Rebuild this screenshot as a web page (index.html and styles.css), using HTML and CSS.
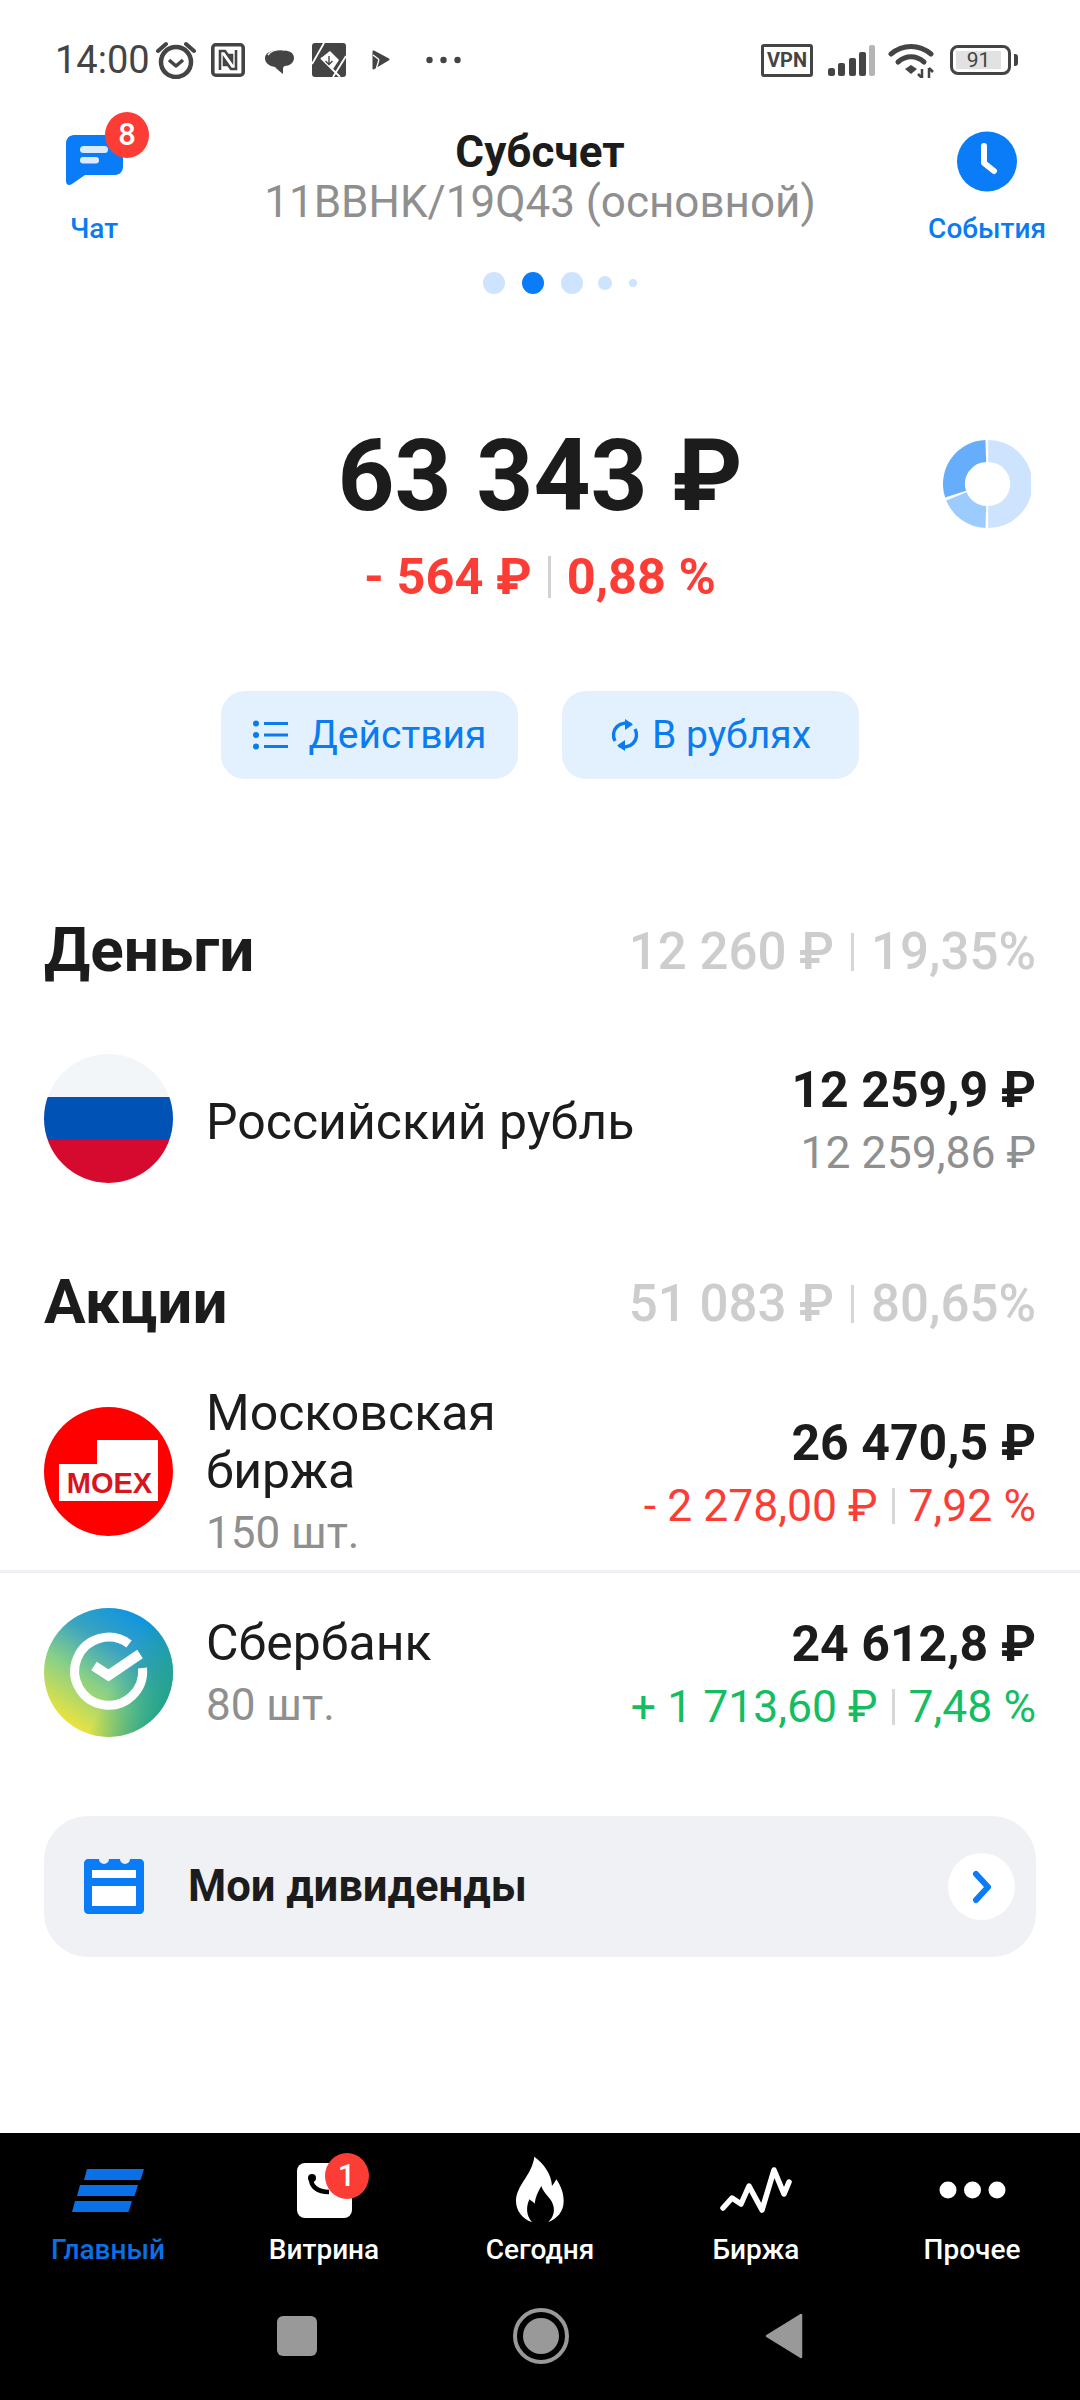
FILE: index.html
```html
<!doctype html>
<html lang="ru">
<head>
  <meta charset="utf-8">
  <meta name="viewport" content="width=device-width, initial-scale=1">
  <title>Субсчет</title>
  <link rel="stylesheet" href="styles.css">
</head>
<body>
<div class="page">

  <div class="status">
    <div class="status-left">
      <span class="time">14:00</span>
      <svg class="s-alarm" width="40" height="38" viewBox="0 0 40 38"><circle cx="20" cy="21" r="15" fill="none" stroke="#444" stroke-width="4.500"/><path d="M13 19l7 6 7-6" fill="none" stroke="#444" stroke-width="3.500" stroke-linejoin="round"/><path d="M2 10L10 3M38 10L30 3" stroke="#444" stroke-width="4" stroke-linecap="round"/></svg>
      <svg class="s-nfc" width="34" height="34" viewBox="0 0 34 34"><rect x="1.800" y="1.800" width="30.400" height="30.400" rx="3" fill="none" stroke="#444" stroke-width="3.600"/><path d="M9 27V8h5l7 10V12h-4M25 7v19h-5l-7-10v6h4" fill="none" stroke="#444" stroke-width="2.600"/></svg>
      <svg class="s-bubble" width="29" height="28" viewBox="0 0 29 28"><path d="M14 4c9 0 15 2 15 8 0 5-5 8-9 8-1 0-2 1-2 3v5c-3-2-6-5-8-7-6-1-10-4-10-9 0-5 6-8 14-8z" fill="#444"/><path d="M3 9c3-4 9-6 17-5" stroke="#fff" stroke-width="1.300" fill="none"/></svg>
      <svg class="s-diamond" width="34" height="34" viewBox="0 0 34 34"><rect width="34" height="34" rx="3" fill="#444"/><path d="M0 21L12 0M9 15L28 34M34 13L21 34" stroke="#fff" stroke-width="1.800"/><path d="M9 15l9-7 9 9-6 9z" fill="#fff"/><path d="M17 13v8M13.500 18l3.500 3.500 3.500-3.500" fill="none" stroke="#444" stroke-width="1.400"/></svg>
      <svg class="s-play" width="18" height="20" viewBox="0 0 18 20"><path d="M1.500 1.500l15 8-15 9z" fill="#444" stroke="#444" stroke-width="2" stroke-linejoin="round"/><path d="M7 9.500L1 5M7 9.500L4.500 18" stroke="#fff" stroke-width="1.300"/></svg>
      <svg class="s-more" width="35" height="8" viewBox="0 0 35 8"><circle cx="3.500" cy="4" r="3.200" fill="#444"/><circle cx="17.500" cy="4" r="3.200" fill="#444"/><circle cx="31.500" cy="4" r="3.200" fill="#444"/></svg>
    </div>
    <div class="status-right">
      <span class="vpn">VPN</span>
      <svg class="s-signal" width="47" height="31" viewBox="0 0 47 31"><rect x="0" y="23" width="7" height="8" rx="2.500" fill="#444"/><rect x="10" y="18" width="7" height="13" rx="2" fill="#444"/><rect x="21" y="13" width="7" height="18" rx="2" fill="#444"/><rect x="31" y="7" width="7" height="24" rx="2" fill="#444"/><rect x="41" y="0" width="6" height="31" rx="2" fill="#b5b5b5"/></svg>
      <svg class="s-wifi" width="46" height="36" viewBox="0 0 46 36"><path d="M3 12C15 2 31 2 43 12" fill="none" stroke="#444" stroke-width="5" stroke-linecap="round"/><path d="M10 20C18 13 28 13 36 20" fill="none" stroke="#444" stroke-width="5" stroke-linecap="round"/><path d="M17 27l6-4 6 4-6 5z" fill="#444"/><path d="M34 27v9M30 32l4 4M41 26v10M41 26l4 4" fill="none" stroke="#444" stroke-width="2.500"/></svg>
      <div class="battery"><div class="battery-body"><span class="battery-fill">91</span></div><div class="battery-tip"></div></div>
    </div>
  </div>

  <header class="head">
    <div class="head-side head-chat">
      <div class="chat-icon">
        <svg width="57" height="50" viewBox="0 0 57 50"><path d="M8 0h41c4.400 0 8 3.600 8 8v24c0 4.400-3.600 8-8 8H19L6 49c-3 2-6 1-6-3V8c0-4.400 3.600-8 8-8z" fill="#0a7cf8"/><rect x="14" y="11" width="28" height="7" rx="3.500" fill="#fff" opacity=".85"/><rect x="14" y="22" width="19" height="6.500" rx="3.200" fill="#fff" opacity=".85"/></svg>
        <span class="badge chat-badge">8</span>
      </div>
      <span class="head-label">Чат</span>
    </div>
    <div class="head-title">
      <div class="title">Субсчет</div>
      <div class="subtitle">11BBHK/19Q43 (основной)</div>
    </div>
    <div class="head-side head-events">
      <svg width="60" height="61" viewBox="0 0 60 61"><circle cx="30" cy="30.500" r="30" fill="#0a7cf8"/><path d="M27 15v17l10 8" fill="none" stroke="#fff" stroke-width="6" stroke-linecap="round" stroke-linejoin="round"/></svg>
      <span class="head-label">События</span>
    </div>
  </header>

  <div class="dots">
    <i class="dot"></i><i class="dot dot-on"></i><i class="dot"></i><i class="dot dot-m"></i><i class="dot dot-s"></i>
  </div>

  <section class="total">
    <div class="total-sum">63 343 ₽</div>
    <div class="total-diff red"><span>- 564 ₽</span><span class="sep sep-big"></span><span>0,88 %</span></div>
    <svg class="donut" width="88" height="88" viewBox="0 0 88 88"><g fill="none" stroke-width="22"><path d="M45.200 11A33 33 0 0 1 45.200 77" stroke="#cde3fe"/><path d="M42.800 77A33 33 0 0 1 13.400 56.400" stroke="#9ccbfe"/><path d="M12.600 54.200A33 33 0 0 1 42.800 11" stroke="#66aefc"/></g></svg>
  </section>

  <div class="actions">
    <div class="btn">
      <svg width="36" height="30" viewBox="0 0 36 30"><circle cx="3" cy="3.500" r="3" fill="#0a7cf0"/><circle cx="3" cy="15" r="3" fill="#0a7cf0"/><circle cx="3" cy="26.500" r="3" fill="#0a7cf0"/><path d="M11 3.500h24M11 15h24M11 26.500h24" stroke="#0a7cf0" stroke-width="3"/></svg>
      <span class="btn-text btn-text-wide">Действия</span>
    </div>
    <div class="btn">
      <svg width="30" height="34" viewBox="0 0 30 34"><path d="M21 6.500A12 12 0 0 0 5 23M9 27.500A12 12 0 0 0 25 11" fill="none" stroke="#0a7cf0" stroke-width="3.400"/><path d="M15 1l8 5.500-8 5.500zM15 33l-8-5.500 8-5.500z" fill="#0a7cf0"/></svg>
      <span class="btn-text">В рублях</span>
    </div>
  </div>

  <section class="group group-money">
    <div class="group-head">
      <h2>Деньги</h2>
      <div class="group-sum"><span>12 260 ₽</span><span class="sep sep-light"></span><span>19,35%</span></div>
    </div>
    <div class="row row-flag">
      <svg class="logo" width="129" height="129" viewBox="0 0 129 129"><defs><clipPath id="c1"><circle cx="64.500" cy="64.500" r="64.500"/></clipPath></defs><g clip-path="url(#c1)"><rect width="129" height="43" fill="#f2f6f9"/><rect y="43" width="129" height="43" fill="#0052b4"/><rect y="86" width="129" height="43" fill="#d60a2e"/></g></svg>
      <div class="row-name"><div class="name">Российский рубль</div></div>
      <div class="row-vals">
        <div class="val">12 259,9 ₽</div>
        <div class="val-sub gray">12 259,86 ₽</div>
      </div>
    </div>
  </section>

  <section class="group group-shares">
    <div class="group-head">
      <h2>Акции</h2>
      <div class="group-sum"><span>51 083 ₽</span><span class="sep sep-light"></span><span>80,65%</span></div>
    </div>
    <div class="row row-moex">
      <svg class="logo" width="129" height="129" viewBox="0 0 129 129"><circle cx="64.500" cy="64.500" r="64.500" fill="#fe0000"/><path d="M15 57H53V33H114V94H15z" fill="#fff"/><text class="moex-text" x="65.500" y="86" text-anchor="middle">MOEX</text></svg>
      <div class="row-name">
        <div class="name">Московская<br>биржа</div>
        <div class="name-sub">150 шт.</div>
      </div>
      <div class="row-vals">
        <div class="val">26 470,5 ₽</div>
        <div class="val-sub red"><span>- 2 278,00 ₽</span><span class="sep sep-small"></span><span>7,92 %</span></div>
      </div>
    </div>
    <div class="row row-sber">
      <svg class="logo" width="129" height="129" viewBox="0 0 129 129"><defs><linearGradient id="g1" x1="0.150" y1="0.900" x2="0.700" y2="0.050"><stop offset="0" stop-color="#f1e53a"/><stop offset=".4" stop-color="#86cf88"/><stop offset=".7" stop-color="#3aa3c0"/><stop offset="1" stop-color="#1295de"/></linearGradient><linearGradient id="g2" x1="0.500" y1="0.400" x2="1" y2="0.650"><stop offset=".2" stop-color="#21a08e" stop-opacity="0"/><stop offset="1" stop-color="#21a38a"/></linearGradient></defs><circle cx="64.500" cy="64.500" r="64.500" fill="url(#g1)"/><circle cx="64.500" cy="64.500" r="64.500" fill="url(#g2)"/><path d="M85 36A34 34 0 1 0 98.500 60" fill="none" stroke="#fff" stroke-width="9"/><path d="M50 58L64.500 67.500 96 46" fill="none" stroke="#fff" stroke-width="10"/></svg>
      <div class="row-name">
        <div class="name">Сбербанк</div>
        <div class="name-sub">80 шт.</div>
      </div>
      <div class="row-vals">
        <div class="val">24 612,8 ₽</div>
        <div class="val-sub green"><span>+ 1 713,60 ₽</span><span class="sep sep-small"></span><span>7,48 %</span></div>
      </div>
    </div>
  </section>

  <div class="dividends">
    <svg width="60" height="55" viewBox="0 0 60 55"><path d="M4 0H15a5 5 0 0 0 10 0H36a5 5 0 0 0 10 0H56c2 0 4 2 4 4v47c0 2-2 4-4 4H4c-2 0-4-2-4-4V4c0-2 2-4 4-4z" fill="#0a7cf8"/><rect x="8" y="11" width="44" height="8" fill="#fff"/><rect x="8" y="27" width="44" height="20" fill="#fff"/></svg>
    <span class="dividends-text">Мои дивиденды</span>
    <span class="dividends-arrow"><svg width="20" height="34" viewBox="0 0 20 34"><path d="M4 4l12 13L4 30" fill="none" stroke="#0a7cf8" stroke-width="6" stroke-linecap="round" stroke-linejoin="round"/></svg></span>
  </div>

  <nav class="tabs">
    <div class="tab tab-on">
      <div class="tab-icon"><svg width="72" height="43" viewBox="0 0 72 43"><path d="M15 0h57l-3.500 11H12zM8 16h58l-3.500 11H5zM3 32h57l-3.500 11H0z" fill="#0a70e6"/></svg></div>
      <span>Главный</span>
    </div>
    <div class="tab">
      <div class="tab-icon">
        <svg width="55" height="55" viewBox="0 0 55 55"><rect width="55" height="55" rx="8" fill="#fff"/><circle cx="15" cy="15" r="4" fill="#000"/><path d="M14 16c0 7 6 13 18 13" fill="none" stroke="#000" stroke-width="4.500"/></svg>
        <span class="badge tab-badge">1</span>
      </div>
      <span>Витрина</span>
    </div>
    <div class="tab">
      <div class="tab-icon"><svg width="48" height="68" viewBox="82 52 144 204"><path d="M137 54C165 75 188 105 190 142C195 135 200 128 203 122C218 145 225 165 225 187C225 220 205 240 178 251C195 235 200 215 192 195C185 175 165 165 158 142C148 160 140 175 138 195C132 188 125 185 122 182C112 205 112 230 130 251C100 240 82 215 82 187C82 140 130 110 137 54Z" fill="#fff"/></svg></div>
      <span>Сегодня</span>
    </div>
    <div class="tab">
      <div class="tab-icon"><svg width="72" height="47" viewBox="0 0 72 47"><path d="M3 41L12 31 21 37 29 19 42 43 54 3 64 27 69 15" fill="none" stroke="#fff" stroke-width="5.500" stroke-linecap="round" stroke-linejoin="round"/></svg></div>
      <span>Биржа</span>
    </div>
    <div class="tab">
      <div class="tab-icon"><svg width="67" height="18" viewBox="0 0 67 18"><circle cx="9" cy="9" r="8.500" fill="#fff"/><circle cx="33.500" cy="9" r="8.500" fill="#fff"/><circle cx="58" cy="9" r="8.500" fill="#fff"/></svg></div>
      <span>Прочее</span>
    </div>
  </nav>

  <div class="sysbar">
    <i class="sys-square"></i>
    <i class="sys-circle"><b></b></i>
    <svg width="38" height="46" viewBox="0 0 38 46"><path d="M36 2v42L2 23z" fill="#999" stroke="#999" stroke-width="2.500" stroke-linejoin="round"/></svg>
  </div>

</div>
</body>
</html>
```

FILE: styles.css
```css
* {
  box-sizing: border-box;
}

html, body {
  margin: 0;
  padding: 0;
  background: #fff;
}

.page {
  width: 1080px;
  height: 2400px;
  display: flex;
  flex-direction: column;
  font-family: Roboto, "Noto Sans", sans-serif;
  color: #1c1c1c;
  overflow: hidden;
}

.red { color: #fb3d36; }
.green { color: #14bd62; }
.gray { color: #8f8f8f; }

/* status bar */
.status {
  height: 112px;
  padding: 8px 62px 0 55px;
  display: flex;
  justify-content: space-between;
  align-items: center;
  flex-shrink: 0;
}

.status-left, .status-right {
  display: flex;
  align-items: center;
}

.time {
  font-size: 38px;
  color: #444;
  width: 101px;
}

.s-nfc { margin-left: 15px; }
.s-bubble { margin-left: 20px; }
.s-diamond { margin-left: 18px; }
.s-play { margin-left: 26px; }
.s-more { margin-left: 36px; }

.vpn {
  width: 52px;
  height: 33px;
  border: 3.500px solid #444;
  border-radius: 3px;
  font-size: 20px;
  font-weight: 700;
  line-height: 26px;
  text-align: center;
  color: #444;
}

.s-signal { margin-left: 15px; }
.s-wifi { margin-left: 13px; }

.battery {
  margin-left: 16px;
  display: flex;
  align-items: center;
}

.battery-body {
  width: 61px;
  height: 30px;
  border: 3.500px solid #444;
  border-radius: 8px;
  padding: 2.500px 3px;
}

.battery-fill {
  display: block;
  width: 45px;
  height: 18px;
  background: #e2e2e2;
  font-size: 21px;
  line-height: 19px;
  text-align: center;
  color: #444;
}

.battery-tip {
  width: 4px;
  height: 12px;
  margin-left: 3px;
  background: #444;
  border-radius: 0 3px 3px 0;
}

/* header */
.head {
  display: grid;
  grid-template-columns: 1fr auto 1fr;
  height: 142px;
  flex-shrink: 0;
}

.head-side {
  display: flex;
  flex-direction: column;
}

.head-chat {
  justify-self: start;
  align-items: flex-start;
  margin-left: 70px;
}

.head-events {
  justify-self: end;
  align-items: center;
  margin-right: 34px;
  padding-top: 19px;
}

.chat-icon {
  position: relative;
  width: 57px;
  height: 50px;
  margin: 23px 0 0 -4px;
}

.chat-icon svg {
  display: block;
}

.badge {
  position: absolute;
  display: block;
  background: #fb3d36;
  color: #fff;
  border-radius: 50%;
  text-align: center;
  font-weight: 500;
}

.chat-badge {
  width: 44px;
  height: 46px;
  top: -23px;
  left: 39px;
  font-size: 31px;
  line-height: 46px;
}

.head-label {
  font-size: 28px;
  font-weight: 500;
  line-height: 32px;
  color: #0a7cf0;
  white-space: nowrap;
}

.head-chat .head-label { margin-top: 28px; }
.head-events .head-label { margin-top: 21px; }

.head-title {
  text-align: center;
  padding-top: 17px;
}

.title {
  font-size: 44px;
  font-weight: 700;
  line-height: 46px;
}

.subtitle {
  font-size: 44px;
  line-height: 54px;
  color: #8f8f8f;
}

.dots {
  display: flex;
  align-items: center;
  justify-content: center;
  gap: 17px;
  height: 22px;
  margin-top: 18px;
  padding-left: 40px;
  flex-shrink: 0;
}

.dot {
  display: block;
  width: 22px;
  height: 22px;
  border-radius: 50%;
  background: #cde3fe;
}

.dot-on { background: #0a7cf8; }
.dot-m { width: 14px; height: 14px; margin-left: -2px; }
.dot-s { width: 8px; height: 8px; }

/* total */
.total {
  position: relative;
  margin-top: 123px;
  text-align: center;
  flex-shrink: 0;
}

.total-sum {
  font-size: 99.500px;
  font-weight: 700;
  line-height: 118px;
}

.total-diff {
  margin-top: 14px;
  font-size: 50.500px;
  font-weight: 700;
  line-height: 56px;
  display: flex;
  justify-content: center;
  align-items: center;
}

.sep {
  display: inline-block;
  width: 3px;
  background: #d2d2d2;
}

.sep-big { height: 42px; margin: 0 16px; }
.sep-light { height: 38px; margin: 0 17px; background: #d6d6d6; }
.sep-small { height: 36px; margin: 0 14px; background: #d8d8d8; }

.donut {
  position: absolute;
  right: 49px;
  top: 23px;
}

/* action buttons */
.actions {
  display: flex;
  justify-content: center;
  gap: 44px;
  margin-top: 86px;
  flex-shrink: 0;
}

.btn {
  width: 297px;
  height: 88px;
  border-radius: 24px;
  background: #e3f0fe;
  display: flex;
  align-items: center;
  justify-content: center;
  gap: 12px;
}

.btn-text {
  font-size: 39px;
  color: #0a7cf0;
}

.btn-text-wide { margin-left: 8px; }

/* groups */
.group {
  flex-shrink: 0;
}

.group-money { margin-top: 135px; }
.group-shares { margin-top: 83px; }

.group-head {
  display: flex;
  justify-content: space-between;
  align-items: center;
  padding: 0 44px;
  height: 70px;
}

h2 {
  margin: 0;
  font-size: 62px;
  font-weight: 700;
}

.group-sum {
  display: flex;
  align-items: center;
  padding-top: 5px;
  font-size: 51px;
  font-weight: 500;
  color: #cdcdcd;
}

.row {
  display: flex;
  align-items: center;
  padding: 0 44px;
}

.row-flag { height: 129px; margin-top: 70px; }
.row-moex { height: 200px; margin-top: 37px; border-bottom: 3px solid #eff0f6; }
.row-sber { height: 129px; margin-top: 35px; }

.logo {
  flex-shrink: 0;
  display: block;
}

.moex-text {
  font-family: "Liberation Sans", Arial, sans-serif;
  font-size: 29px;
  font-weight: 700;
  fill: #d8141d;
}

.row-name {
  margin-left: 33px;
  padding-top: 6px;
  flex: 1;
}

.name {
  font-size: 50px;
  line-height: 58px;
}

.name-sub {
  font-size: 44px;
  line-height: 66px;
  color: #8f8f8f;
}

.row-vals {
  padding-top: 6px;
  text-align: right;
}

.val {
  font-size: 50px;
  font-weight: 700;
  line-height: 63px;
}

.val-sub {
  font-size: 44.500px;
  line-height: 63px;
  display: flex;
  justify-content: flex-end;
  align-items: center;
}

/* dividends */
.dividends {
  margin: 79px 44px 0;
  height: 141px;
  border-radius: 44px;
  background: #f0f1f5;
  display: flex;
  align-items: center;
  padding: 0 21px 0 40px;
  flex-shrink: 0;
}

.dividends-text {
  margin-left: 44px;
  font-size: 43.600px;
  font-weight: 700;
  flex: 1;
}

.dividends-arrow {
  width: 67px;
  height: 67px;
  border-radius: 50%;
  background: #fff;
  display: flex;
  align-items: center;
  justify-content: center;
}

/* bottom */
.tabs {
  margin-top: auto;
  background: #000;
  height: 150px;
  display: flex;
  flex-shrink: 0;
}

.tab {
  flex: 1;
  display: flex;
  flex-direction: column;
  align-items: center;
  padding-top: 22px;
  color: #fff;
  font-size: 28px;
  font-weight: 500;
  line-height: 34px;
}

.tab-on { color: #0a70e6; }

.tab-icon {
  position: relative;
  height: 70px;
  margin-bottom: 8px;
  display: flex;
  align-items: center;
}

.tab-badge {
  width: 44px;
  height: 46px;
  top: -2px;
  left: 28px;
  font-size: 31px;
  line-height: 46px;
}

.sysbar {
  background: #000;
  height: 117px;
  padding-bottom: 12px;
  display: flex;
  justify-content: center;
  align-items: center;
  gap: 196px;
  flex-shrink: 0;
}

.sys-square {
  display: block;
  width: 40px;
  height: 40px;
  border-radius: 6px;
  background: #999;
}

.sys-circle {
  display: flex;
  align-items: center;
  justify-content: center;
  width: 56px;
  height: 56px;
  border: 4px solid #999;
  border-radius: 50%;
}

.sys-circle b {
  display: block;
  width: 36px;
  height: 36px;
  border-radius: 50%;
  background: #999;
}
```
